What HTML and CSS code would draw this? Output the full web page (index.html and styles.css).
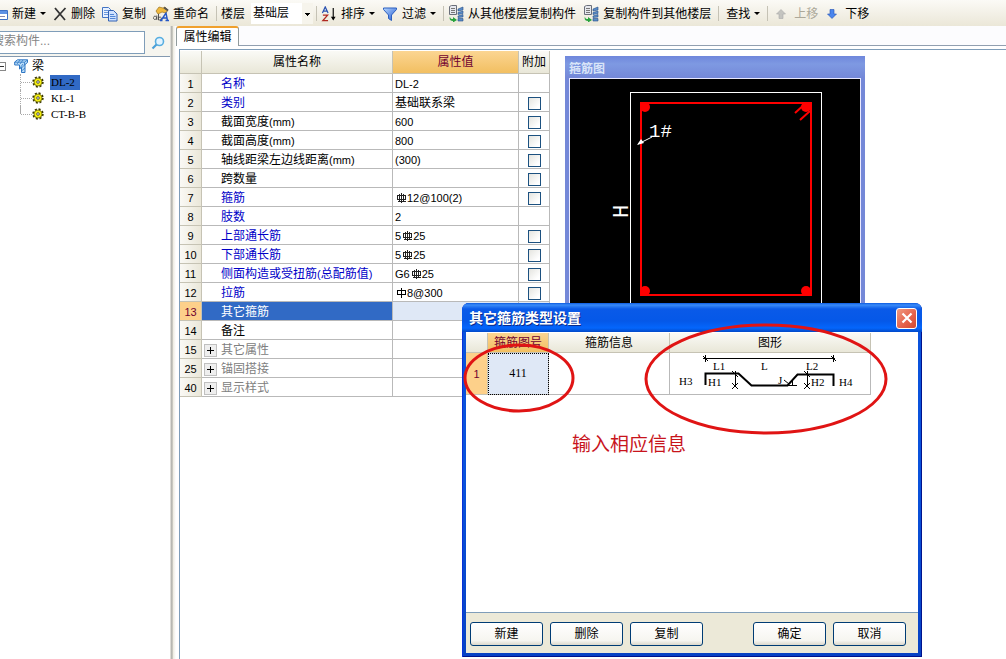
FILE: index.html
```html
<!DOCTYPE html>
<html lang="zh-CN">
<head>
<meta charset="utf-8">
<title>属性编辑</title>
<link rel="stylesheet" href="styles.css">
</head>
<body>
<svg class="defs" aria-hidden="true">
  <defs>
    <linearGradient id="blue" x1="0" y1="0" x2="1" y2="1"><stop offset="0" stop-color="#b8d8ff"/><stop offset="1" stop-color="#1f57d0"/></linearGradient>
    <symbol id="gear" viewBox="0 0 12 12">
      <circle cx="6" cy="6" r="4.8" fill="none" stroke="#3a3800" stroke-width="1.800" stroke-dasharray="2 1.770"/>
      <circle cx="6" cy="6" r="4" fill="#f4ee10" stroke="#5a5600" stroke-width=".7"/>
      <circle cx="6" cy="6" r="1.300" fill="#fff" stroke="#333" stroke-width=".8"/>
    </symbol>
    <symbol id="rebar3" viewBox="0 0 12 12">
      <path d="M6.500 1v10M2.500 3.500h8v4h-8zM4.500 2v7M8.500 2v7M3 9.500h8" fill="none" stroke="#222" shape-rendering="crispEdges"/>
    </symbol>
    <symbol id="rebar1" viewBox="0 0 12 12">
      <path d="M6.500 1v10M2.500 3.500h8v4h-8z" fill="none" stroke="#000" shape-rendering="crispEdges"/>
    </symbol>
    <symbol id="floors" viewBox="0 0 16 17">
      <path d="M1.500 1.500l2-1h5v9h-7z" fill="#e6e8ee" stroke="#6a6f7a"/>
      <path d="M3 3.500h4M3 5.500h4M3 7.500h4" stroke="#777" fill="none"/>
      <path d="M10 4l5-2v3l-5 1zM10 7.500l5-1.500v2.500l-5 1zM10 11l5-1.500v2.500l-5 .5zM10 13.500h5V16h-5z" fill="#5a8cc8" stroke="#274f86" stroke-width=".6"/>
      <path d="M2 11.500c0 2 1 2.500 3 2.500v-2l4 3-4 2.500v-1.500c-3 0-4-2-3-4.500z" fill="#27a33c"/>
    </symbol>
  </defs>
</svg>

<div class="window">
  <div class="toolbar" role="toolbar">
    <button class="tool"><svg class="half-icon" viewBox="8 0 8 16"><path d="M0 4.500h15.500v9H0z" fill="#fff" stroke="#3d6fc4"/><path d="M0 5h15v3H0z" fill="#5d91e4"/><path d="M8 10.500h5" stroke="#88a"/></svg>新建<i class="caret"></i></button>
    <button class="tool"><svg class="ic14" viewBox="0 0 14 14"><path d="M2 1l10 12M12.500 1L1.500 13" stroke="#333" stroke-width="1.8" fill="none"/></svg>删除</button>
    <button class="tool"><svg class="ic16" viewBox="0 0 16 16"><path d="M.5 1.500h6l2 2v8h-8z" fill="#e7f1ff" stroke="#4374c4"/><path d="M2 4.500h4M2 6.500h4M2 8.500h4" stroke="#6b98dc"/><path d="M6.500 4.500h5l3.500 3.500v7H6.500z" fill="#cfe2ff" stroke="#3262b4"/><path d="M8 8.500h4M8 10.500h5.500M8 12.500h5.500" stroke="#5286d4"/></svg>复制</button>
    <button class="tool"><svg class="ic16" viewBox="0 0 16 16"><path d="M3 5l3-4 4 1 2-1 3 3-2 3-4-1-4 2z" fill="#f0b93c" stroke="#9b721e" stroke-width=".7"/><path d="M11 1.500l4 3" stroke="#555" stroke-width="2"/><path d="M3.500 11.500a1.600 1.600 0 1 1-2.500-1 1.600 1.600 0 0 1 2.500 1zM3.800 9.500V14M5.500 8v6M5.500 12a1.500 1.500 0 1 1 1 2h-1" fill="none" stroke="#444" stroke-width=".9"/><path d="M8 14.500L13 7l1.500 7.500M10 12h4M7 14.500h2.500M12.500 14.500H16" fill="none" stroke="#2457c5" stroke-width="1.400"/></svg>重命名</button>
    <span class="sep"></span>
    <label class="floor">楼层
      <select class="floor-select"><option>基础层</option></select>
    </label>
    <span class="sep"></span>
    <button class="tool"><svg class="ic16" viewBox="0 0 16 17"><path d="M1 7.500L4 1l3 6.500M2 5.500h4" fill="none" stroke="#2850b0" stroke-width="1.300"/><path d="M1.500 9.700h5l-5 5.800h5.500" fill="none" stroke="#b02820" stroke-width="1.400"/><path d="M12.500 2v12" stroke="#000" stroke-width="1.200"/><path d="M10 11.500h5l-2.500 4z"/></svg>排序<i class="caret"></i></button>
    <button class="tool"><svg class="ic16" viewBox="0 0 16 16"><path d="M1.500 2h13v1.500L9.500 9v5.500l-3-2V9l-5-5.500z" fill="url(#blue)" stroke="#2b5fbf"/></svg>过滤<i class="caret"></i></button>
    <span class="sep"></span>
    <button class="tool"><svg class="ic17"><use href="#floors"/></svg>从其他楼层复制构件</button>
    <button class="tool"><svg class="ic17"><use href="#floors"/></svg>复制构件到其他楼层</button>
    <span class="sep"></span>
    <button class="tool find">查找<i class="caret"></i></button>
    <span class="sep"></span>
    <button class="tool move" disabled><svg class="ic10" viewBox="0 0 10 10"><path d="M5 .5L9.500 5H7v4.500H3V5H.5z" fill="#c4c4c0" stroke="#aaa" stroke-width=".6"/></svg>上移</button>
    <button class="tool move"><svg class="ic10" viewBox="0 0 10 10"><path d="M5 9.500L.5 5H3V.5h4V5h2.500z" fill="#4a86ee" stroke="#2450b4" stroke-width=".6"/></svg>下移</button>
  </div>

  <div class="main">
    <aside class="side">
      <div class="search">
        <input type="text" placeholder="搜索构件..." aria-label="搜索构件">
        <button class="search-btn" aria-label="搜索"><svg viewBox="0 0 14 14"><circle cx="8.500" cy="5.500" r="4" fill="#e2f3ff" stroke="#58aee0" stroke-width="1.600"/><path d="M5.500 8.500L1.500 12.500" stroke="#4a9fd8" stroke-width="2.200"/></svg></button>
      </div>
      <div class="tree">
        <div class="root"><span class="minus"></span><svg class="ic14" viewBox="0 0 14 14"><path d="M.7 3L3.500 .8h10v2.700L11 5.500v8H7.500V8.500L5.500 10V6H.7z" fill="#b9dcf8" stroke="#2f77c4"/><path d="M.7 3.200h9.800v3M10.500 3.200l3-2.200M3 5l3-4M6 5l3-4M9 5l-3 4M11 5.500L7.500 9M11 9l-3.500 3" stroke="#2f77c4" stroke-width=".8" fill="none"/></svg>梁</div>
        <ul>
          <li><svg class="gear"><use href="#gear"/></svg><span class="selected">DL-2</span></li>
          <li><svg class="gear"><use href="#gear"/></svg><span>KL-1</span></li>
          <li><svg class="gear"><use href="#gear"/></svg><span>CT-B-B</span></li>
        </ul>
      </div>
    </aside>
    <div class="splitter"></div>
    <section class="editor">
      <div class="tabs"><button class="tab">属性编辑</button><span class="tab-line"></span></div>
      <div class="pane">
        <table class="props">
          <colgroup><col class="c-no"><col class="c-name"><col class="c-value"><col class="c-add"></colgroup>
          <thead><tr><th></th><th>属性名称</th><th class="hot">属性值</th><th>附加</th></tr></thead>
          <tbody>
            <tr><th>1</th><td class="key">名称</td><td><span class="n">DL-2</span></td><td></td></tr>
            <tr><th>2</th><td class="key">类别</td><td>基础联系梁</td><td><input type="checkbox" aria-label="类别附加"></td></tr>
            <tr><th>3</th><td>截面宽度<span class="n">(mm)</span></td><td><span class="n">600</span></td><td><input type="checkbox" aria-label="截面宽度附加"></td></tr>
            <tr><th>4</th><td>截面高度<span class="n">(mm)</span></td><td><span class="n">800</span></td><td><input type="checkbox" aria-label="截面高度附加"></td></tr>
            <tr><th>5</th><td>轴线距梁左边线距离<span class="n">(mm)</span></td><td><span class="n">(300)</span></td><td><input type="checkbox" aria-label="距离附加"></td></tr>
            <tr><th>6</th><td>跨数量</td><td></td><td><input type="checkbox" aria-label="跨数量附加"></td></tr>
            <tr><th>7</th><td class="key">箍筋</td><td><svg class="bar"><use href="#rebar3"/></svg><span class="n">12@100(2)</span></td><td><input type="checkbox" aria-label="箍筋附加"></td></tr>
            <tr><th>8</th><td class="key">肢数</td><td><span class="n">2</span></td><td></td></tr>
            <tr><th>9</th><td class="key">上部通长筋</td><td><span class="n">5</span><svg class="bar"><use href="#rebar3"/></svg><span class="n">25</span></td><td><input type="checkbox" aria-label="上部通长筋附加"></td></tr>
            <tr><th>10</th><td class="key">下部通长筋</td><td><span class="n">5</span><svg class="bar"><use href="#rebar3"/></svg><span class="n">25</span></td><td><input type="checkbox" aria-label="下部通长筋附加"></td></tr>
            <tr><th>11</th><td class="key">侧面构造或受扭筋<span class="n">(</span>总配筋值<span class="n">)</span></td><td><span class="n">G6</span><svg class="bar"><use href="#rebar3"/></svg><span class="n">25</span></td><td><input type="checkbox" aria-label="侧面筋附加"></td></tr>
            <tr><th>12</th><td class="key">拉筋</td><td><svg class="bar"><use href="#rebar1"/></svg><span class="n">8@300</span></td><td><input type="checkbox" aria-label="拉筋附加"></td></tr>
            <tr class="current"><th>13</th><td>其它箍筋</td><td></td><td></td></tr>
            <tr><th>14</th><td>备注</td><td></td><td></td></tr>
            <tr><th>15</th><td class="group"><button class="plus" aria-label="展开"></button>其它属性</td><td></td><td></td></tr>
            <tr><th>25</th><td class="group"><button class="plus" aria-label="展开"></button>锚固搭接</td><td></td><td></td></tr>
            <tr><th>40</th><td class="group"><button class="plus" aria-label="展开"></button>显示样式</td><td></td><td></td></tr>
          </tbody>
        </table>
      </div>
    </section>
  </div>

  <section class="preview">
    <h2>箍筋图</h2>
    <svg viewBox="0 0 290 258" class="drawing">
      <rect x="60.500" y="13.500" width="191" height="260" fill="none" stroke="#fff"/>
      <rect x="71" y="24" width="170" height="192" fill="none" stroke="#f00" stroke-width="2"/>
      <g fill="#f00"><circle cx="75" cy="28" r="5"/><circle cx="236" cy="28" r="5"/><circle cx="75" cy="212" r="5"/><circle cx="236" cy="212" r="5"/></g>
      <path d="M236 24l-11 10M240 32l-10 9" stroke="#f00" stroke-width="2"/>
      <path d="M68 65l14-7" stroke="#fff"/><path d="M67 66l4-6 3 4z" fill="#fff"/>
      <text x="79" y="58" class="cad">1#</text>
      <text x="0" y="0" class="cad-h" transform="translate(58 139) rotate(-90)">H</text>
    </svg>
  </section>

  <section class="dialog" role="dialog" aria-label="其它箍筋类型设置">
    <header><h1>其它箍筋类型设置</h1><button class="close" aria-label="关闭"><svg viewBox="0 0 12 12"><path d="M1.500 1.500l9 9M10.500 1.500l-9 9" stroke="#fff" stroke-width="2.200"/></svg></button></header>
    <div class="content">
      <table class="types">
        <colgroup><col class="t-no"><col class="t-id"><col class="t-info"><col class="t-shape"></colgroup>
        <thead><tr><th></th><th class="hot">箍筋图号</th><th>箍筋信息</th><th>图形</th></tr></thead>
        <tbody><tr><th>1</th><td class="picked">411</td><td></td><td>
          <svg class="shape" viewBox="0 0 200 41">
            <g fill="none" stroke="#000">
              <path d="M33 5.500h132M35.500 2v7M163.500 2v7M33 3l5 5M161 3l5 5"/>
              <path d="M65.500 18v16M62 18l6 6M62 30l6 6M68 30l-6 6M137.500 18v16M134 18l6 6M134 30l6 6M140 30l-6 6"/>
              <path d="M35.500 32V20.500h33l13 12h36l10-11h36V33" stroke-width="2"/>
              <path d="M114 27l5 4M117 32.500h10M122.500 26v7"/>
            </g>
            <text x="9" y="32">H3</text><text x="38" y="33">H1</text><text x="43" y="17">L1</text><text x="91" y="17">L</text><text x="108" y="31">J</text><text x="136" y="17">L2</text><text x="141" y="33">H2</text><text x="169" y="33">H4</text>
          </svg></td></tr></tbody>
      </table>
      <p class="note">输入相应信息</p>
      <svg class="rings" viewBox="0 0 452 120"><ellipse cx="53" cy="46" rx="54" ry="33"/><ellipse cx="300" cy="47" rx="120" ry="54"/></svg>
    </div>
    <footer>
      <button>新建</button><button>删除</button><button>复制</button>
      <span class="grow"></span>
      <button>确定</button><button>取消</button>
    </footer>
  </section>
</div>
</body>
</html>
```
FILE: styles.css
```css
* { box-sizing: border-box; }
body {
  margin: 0;
  font: 12px/16px "Liberation Sans", "Noto Sans CJK SC", sans-serif;
  color: #000;
  background: #fff;
}
button, input, select { font: inherit; color: inherit; margin: 0; }
button { padding: 0; border: 0; background: none; }
h1, h2, p, ul { margin: 0; padding: 0; }
ul { list-style: none; }
.defs { position: absolute; width: 0; height: 0; }
.window { position: relative; display: flex; flex-direction: column; height: 100vh; overflow: hidden; }

/* Toolbar */
.toolbar {
  display: flex;
  align-items: center;
  height: 26px;
  flex: none;
  padding-top: 1px;
  background: linear-gradient(#fbfaf6, #ebe7d8);
  white-space: nowrap;
}
.tool { display: flex; align-items: center; gap: 4px; margin-right: 7px; }
.tool:disabled { color: #aca899; }
.find { margin-left: 3px; }
.move { gap: 8px; margin: 0 9px 0 4px; }
.move + .move { margin-left: 0; }
.caret { border: 3px solid transparent; border-top-color: #000; border-bottom: 0; }
.half-icon { width: 8px; height: 16px; }
.ic10 { width: 10px; height: 10px; }
.ic14 { width: 14px; height: 14px; }
.ic16 { width: 16px; height: 16px; }
.ic17 { width: 16px; height: 17px; }
.sep { width: 1px; height: 15px; margin-right: 4px; background: #c5c2b5; }
.floor { display: flex; align-items: center; gap: 6px; margin-right: 3px; }
.floor-select {
  width: 62px;
  height: 21px;
  padding: 0 0 2px 2px;
  border: 0;
  appearance: none;
  background: linear-gradient(#000, #000) 54px 10px / 5px 1px no-repeat,
    linear-gradient(#000, #000) 55px 11px / 3px 1px no-repeat,
    linear-gradient(#000, #000) 56px 12px / 1px 1px no-repeat,
    linear-gradient(90deg, #fff 51px, #f6f4ec 51px);
}

/* Component tree */
.main { display: flex; flex: 1; min-height: 0; }
.side { width: 170px; flex: none; overflow: hidden; }
.search { display: flex; height: 31px; padding: 5px 0 2px; background: #f6f5ef; border-bottom: 1px solid #8499b0; }
.search input {
  flex: 1;
  min-width: 0;
  margin-left: -14px;
  padding: 0 0 3px 5px;
  border: 1px solid #7f9db9;
  background: #fff;
  outline: 0;
}
.search input::placeholder { color: #858585; }
.search-btn { width: 25px; }
.search-btn svg { width: 14px; height: 14px; display: block; margin: 0 auto; }
.tree { padding-top: 1px; }
.root { display: flex; align-items: center; height: 16px; }
.root .ic14 { margin: 0 4px 0 8px; }
.minus { width: 6px; height: 9px; border: 1px solid #888; border-left: 0; background: linear-gradient(#333, #333) 0 3px / 4px 1px no-repeat; }
.tree ul { margin-left: 20px; font: 11px/16px "Liberation Serif", serif; }
.tree li { display: flex; align-items: center; height: 16px; border-left: 1px dotted #aaa; }
.tree li:last-child { border-image: linear-gradient(#aaa 50%, transparent 50%) 1; }
.tree li::before { content: ""; width: 11px; border-top: 1px dotted #aaa; }
.gear { width: 12px; height: 12px; margin-right: 6px; }
.tree li span { padding: 0 5px 0 1px; line-height: 15px; }
.tree .selected { background: #316ac5; }
.splitter { width: 6px; flex: none; background: linear-gradient(90deg, #efeee8, #a5a5a0 2px, #eceadf 3px, #fff 6px); }

/* Property editor */
.editor { flex: 1; min-width: 0; display: flex; flex-direction: column; }
.tabs { display: flex; height: 20px; background: #fcfcfe; }
.tab { width: 63px; border: 1px solid #919b9c; border-top: 2px solid #f0a02c; border-bottom: 0; border-radius: 3px 3px 0 0; background: #fff; }
.tab-line { flex: 1; border-bottom: 1px solid #919fb0; }
.pane { flex: 1; margin: 3px 0 0 3px; padding-top: 1px; border: 1px solid #7f9db9; border-width: 1px 0 0 1px; }
table { border-collapse: separate; border-spacing: 0; table-layout: fixed; }
th { font-weight: normal; }
td, th { padding: 0; border: 1px solid #b9b9b9; border-width: 0 1px 1px 0; white-space: nowrap; overflow: hidden; }
.props { width: 370px; }
.c-no { width: 22px; }
.c-name { width: 191px; }
.c-value { width: 126px; }
.c-add { width: 31px; }
.props thead th { height: 23px; }
.props tbody tr { height: 19px; line-height: 16px; }
.props tbody td, .props tbody th { padding-top: 2px; }
thead th { background: linear-gradient(#fafaf6, #e9e7d8); border-color: #c6c3b4; }
tbody th { background: linear-gradient(90deg, #faf9f5, #eae7d9); border-color: #c6c3b4; font-size: 11px; }
thead .hot { background: linear-gradient(#fbd592, #f2bf61); color: #700030; }
.props td:nth-child(2) { padding-left: 19px; }
.props td:nth-child(3) { padding-left: 2px; }
.props .key { color: #0000c8; }
.n { font-size: 11px; }
.bar { width: 12px; height: 12px; vertical-align: -2px; }
input[type="checkbox"] { appearance: none; display: block; width: 13px; height: 13px; margin: 0 auto; border: 1px solid #1c5180; background: linear-gradient(135deg, #e4e4df, #fff 80%); }
.current td { background: #dfe8f6; }
.current td:nth-child(2) { background: #316ac5; color: #fff; }
.current th { background: #fdd08a; color: #700030; }
.props td.group:nth-child(2) { padding-left: 2px; color: #808080; }
.plus {
  width: 13px;
  height: 13px;
  margin-right: 4px;
  vertical-align: -2px;
  border: 1px solid #c0c0c0;
  background: linear-gradient(#000, #000) 2px 5px / 7px 1px no-repeat, linear-gradient(#000, #000) 5px 2px / 1px 7px no-repeat, #eee;
}

/* Floating drawing window */
.preview { position: absolute; left: 565px; top: 56px; width: 300px; padding: 0 4px; background: linear-gradient(#6f87dc, #7e99e2 8px, #7488d8 22px); }
.preview h2 { height: 22px; font-size: 12px; line-height: 26px; color: #d8e4f8; }
.drawing { display: block; width: 100%; background: #000; border: 1px solid #e8e8ff; }
.cad { font: 19px "Liberation Mono", monospace; fill: #fff; }
.cad-h { font: 22px "Liberation Mono", monospace; fill: #fff; }

/* Dialog */
.dialog { position: absolute; left: 462px; top: 303px; width: 460px; padding: 0 4px 4px; background: linear-gradient(#0a52dc, #0a52dc 50%, #0842c4); border-radius: 7px 7px 0 0; box-shadow: inset 1px 0 #0831d9, inset -1px -1px #00138c; }
.dialog header { display: flex; align-items: center; justify-content: space-between; height: 29px; margin: 0 -4px; padding: 1px 5px 0 7px; border-radius: 7px 7px 0 0; background: linear-gradient(#0a5ae0, #3a8bf8 2px, #0a5ae8 6px, #0558e8 18px, #0466fc 25px, #0148c8); }
.dialog h1 { font-size: 14px; line-height: 20px; color: #fff; text-shadow: 1px 1px #0a2a88; }
.close { width: 21px; height: 21px; border: 1px solid #fff; border-radius: 3px; background: linear-gradient(135deg, #f09a80, #e4604a 60%, #d04a30); }
.close svg { display: block; width: 12px; height: 12px; margin: 0 auto; }
.content { position: relative; height: 281px; padding-top: 1px; background: #fff; border-bottom: 1px solid #7f9db9; }
.types { width: 405px; }
.t-no { width: 22px; }
.t-id { width: 61px; }
.t-info { width: 121px; }
.t-shape { width: 201px; }
.types thead th { height: 20px; }
.types tbody tr { height: 42px; }
.types tbody th { background: #fdd08a; color: #700030; }
.types td { font: 12px "Liberation Serif", serif; text-align: center; }
.types .picked { background: #dfe8f6; outline: 1px dotted #000; outline-offset: -1px; }
.shape { display: block; width: 100%; height: 41px; }
.shape text { font: 11px "Liberation Serif", serif; }
.note { margin: 36px 0 0 106px; font-size: 19px; line-height: 28px; color: #c8141c; }
.rings { position: absolute; left: 0; top: 0; width: 100%; height: 120px; overflow: visible; fill: none; stroke: #e01414; stroke-width: 3px; }
.dialog footer { display: flex; align-items: center; gap: 7px; height: 40px; padding: 1px 12px 0 4px; background: #ece9d8; }
.dialog footer button { width: 73px; height: 24px; border: 1px solid #003c74; border-radius: 3px; background: linear-gradient(#fff, #f6f5f0 80%, #dcd8cc); }
.grow { flex: 1; }
```
